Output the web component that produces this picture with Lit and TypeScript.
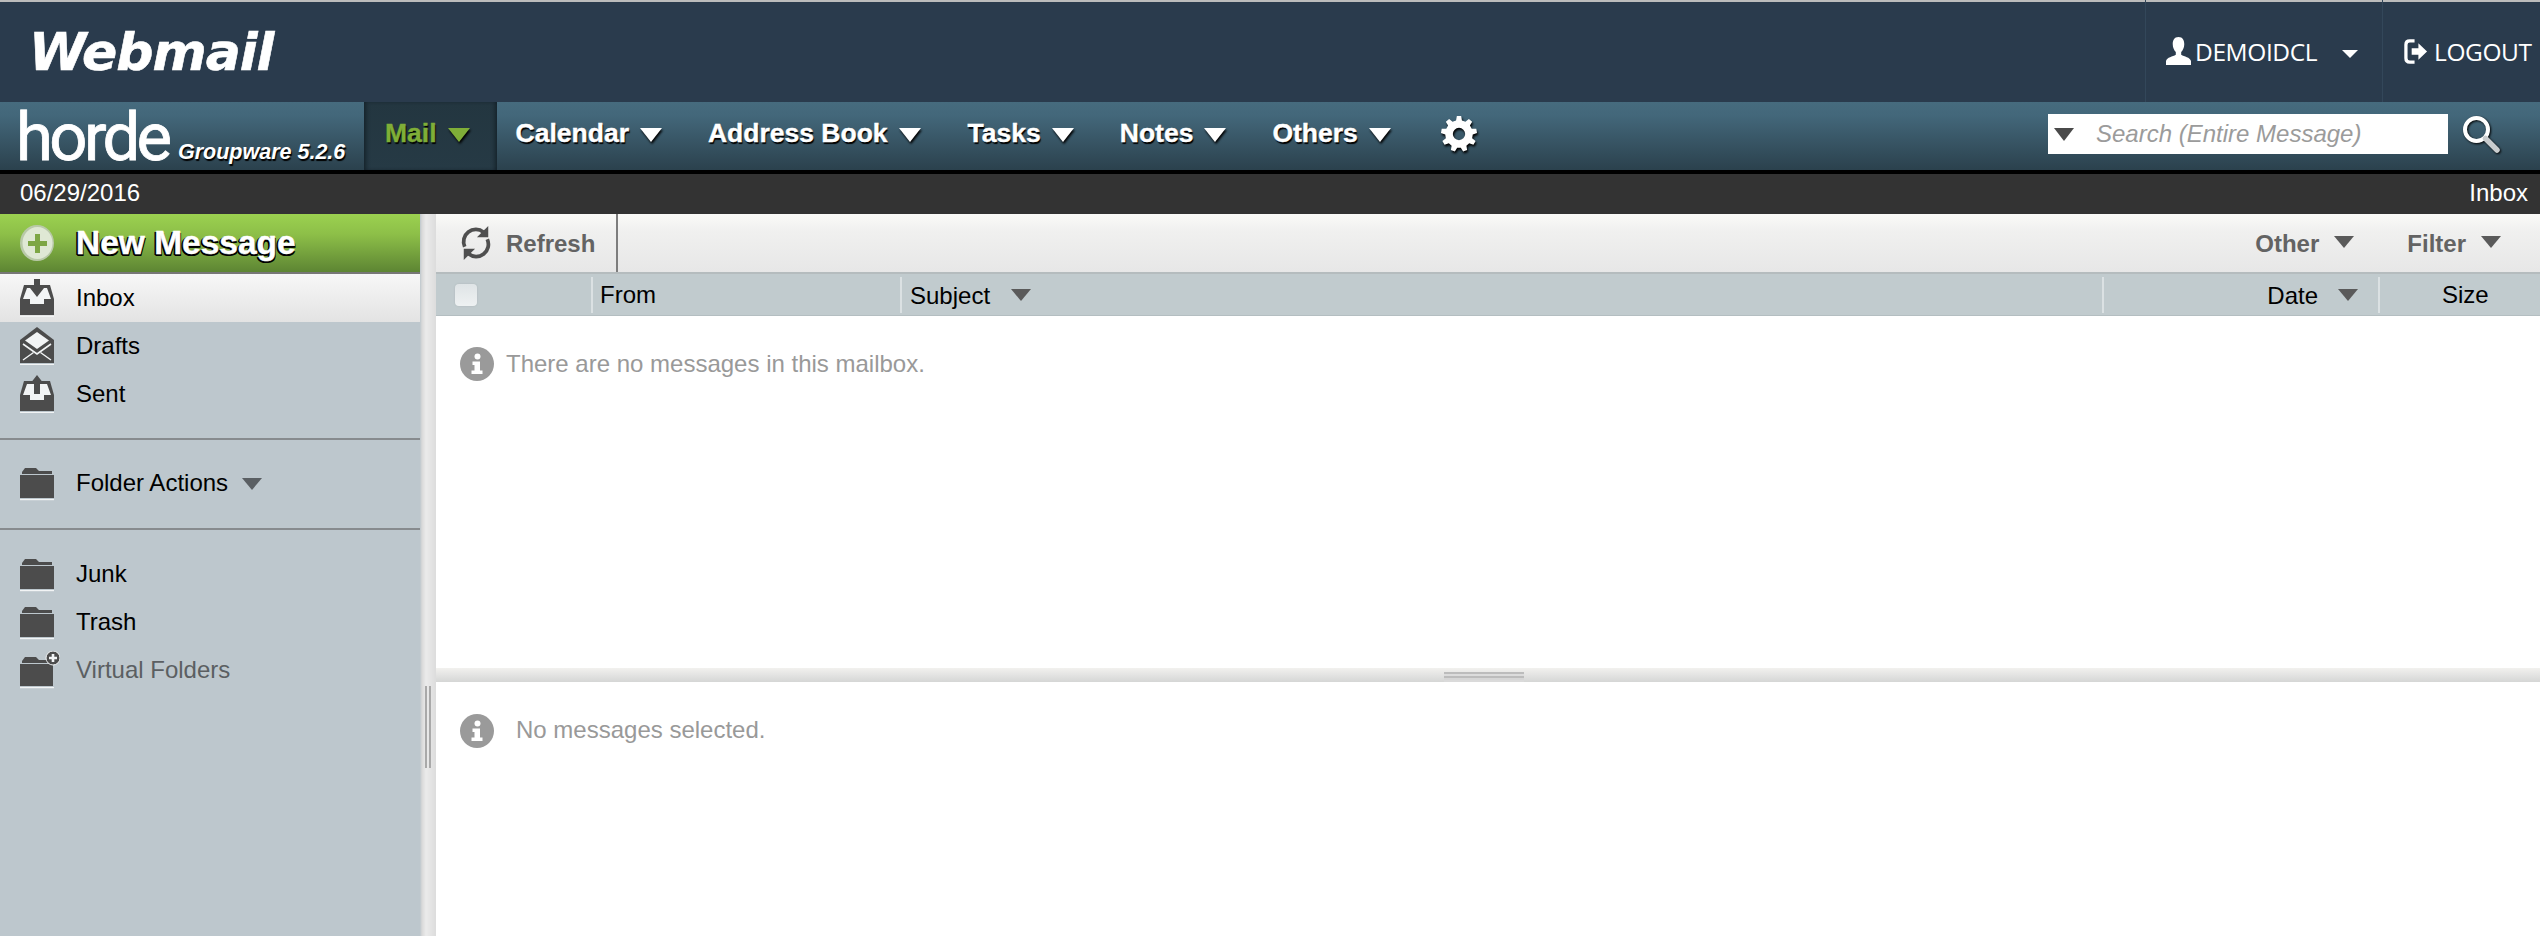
import { LitElement, html, css, svg } from "lit";
import { customElement } from "lit/decorators.js";

const gearPath = (() => {
  const cx = 20, cy = 20, n = 9, ro = 19, ri = 14.5;
  let d = "";
  for (let i = 0; i < n; i++) {
    const a = (i / n) * Math.PI * 2 - Math.PI / 2;
    const w = Math.PI / n;
    const pts = [
      [ri, a - w * 0.62],
      [ro, a - w * 0.34],
      [ro, a + w * 0.34],
      [ri, a + w * 0.62],
    ];
    for (const [r, t] of pts) {
      d += `${d ? "L" : "M"}${(cx + r * Math.cos(t)).toFixed(2)} ${(cy + r * Math.sin(t)).toFixed(2)} `;
    }
  }
  return d + "Z M20 13.5 A6.5 6.5 0 1 0 20 26.5 A6.5 6.5 0 1 0 20 13.5 Z";
})();

const ICON = "#4c4c4c";
const HI = "#f2f4f5";

const tray = (arrow: "down" | "up") => svg`
  <path d="M4 6H30L34 20V36H0V20Z" fill=${ICON}/>
  <rect x="0" y="37" width="34" height="1.2" fill=${HI}/>
  <path d="M7 9H27L31 20H24L24 25H10L10 20H3Z" fill=${HI}/>
  ${arrow === "down"
    ? svg`<path d="M14 0H20V9H24L17 18L10 9H14Z" fill=${ICON}/>`
    : svg`<path d="M17 0L24 9H20V19H14V9H10Z" fill=${ICON}/>`}
`;

const icons: Record<string, unknown> = {
  inbox: tray("down"),
  sent: tray("up"),
  drafts: svg`
    <path d="M17 0L34 13V36H0V13Z" fill=${ICON}/>
    <path d="M17 5L29 13.5L17 22L5 13.5Z" fill=${HI}/>
    <path d="M3 33L13.5 25.5M31 33L20.5 25.5" stroke=${HI} stroke-width="1.4"/>
    <path d="M3 17L17 27L31 17" fill="none" stroke=${HI} stroke-width="1.6"/>
    <rect x="0" y="37" width="34" height="1.2" fill=${HI}/>
  `,
  folder: svg`
    <path d="M2 8L5 4H16L19 7H32V10H2Z" fill=${ICON}/>
    <path d="M0 11H34V34H0Z" fill=${ICON}/>
    <rect x="0" y="35" width="34" height="1.2" fill=${HI}/>
  `,
  vfolder: svg`
    <path d="M2 10L5 6H16L19 9H29V12H2Z" fill=${ICON}/>
    <path d="M0 13H33V35H0Z" fill=${ICON}/>
    <rect x="0" y="36" width="34" height="1.2" fill=${HI}/>
    <circle cx="33" cy="7" r="7" fill=${ICON} stroke=${HI} stroke-width="1"/>
    <path d="M33 3V11M29 7H37" stroke=${HI} stroke-width="2.6"/>
  `,
};

const sideIcon = (name: string) => html`<svg class="side-icon" viewBox="0 0 40 38" width="40" height="38">${icons[name]}</svg>`;

const infoIcon = () => html`<svg class="info" viewBox="0 0 34 34" width="34" height="34">
  <circle cx="17" cy="17" r="17" fill="#9a9a9a"/>
  <circle cx="17.5" cy="9.5" r="3" fill="#fff"/>
  <path d="M12.5 14.5H20V23.5H22.5V27H11.5V23.5H14.5V18H12.5Z" fill="#fff"/>
</svg>`;

@customElement("app-root")
export class AppRoot extends LitElement {
  static styles = css`
    :host {
      display: flex;
      flex-direction: column;
      height: 100vh;
      min-height: 936px;
      overflow: hidden;
      font-family: "Liberation Sans", Arial, sans-serif;
      font-size: 24px;
      color: #000;
      background: #fff;
    }
    svg { display: block; flex: none; }

    /* top header */
    .top {
      height: 100px;
      flex: none;
      border-top: 2px solid #bcbcbc;
      background: #2a3b4d;
      display: flex;
      align-items: stretch;
      color: #fff;
    }
    .brand {
      font-family: "DejaVu Sans", sans-serif;
      font-weight: 700;
      font-style: italic;
      font-size: 52px;
      letter-spacing: -1px;
      line-height: 100px;
      margin-left: 29px;
      flex: 1;
      -webkit-text-stroke: 0.6px #fff;
    }
    .top-cell {
      border-left: 1px solid #33475a;
      display: flex;
      align-items: center;
      font-family: "Open Sans", sans-serif;
      font-size: 24.5px;
      letter-spacing: -0.4px;
      margin-top: -2px;
    }
    .user { width: 237px; padding-left: 20px; box-sizing: border-box; }
    .user .name { margin-left: 4px; }
    .user .caret { margin-left: 25px; margin-top: 6px; }
    .logout { width: 158px; padding-left: 21px; box-sizing: border-box; }
    .logout .name { margin-left: 6px; }
    .caret {
      width: 0; height: 0;
      border-left: 8px solid transparent;
      border-right: 8px solid transparent;
      border-top: 8px solid #fff;
    }

    /* nav bar */
    .nav {
      height: 68px;
      flex: none;
      background: linear-gradient(#466b7e 0%, #43677a 20%, #2b414d 100%);
      border-bottom: 4px solid #000;
      display: flex;
      align-items: stretch;
      color: #fff;
    }
    .logo {
      width: 364px;
      flex: none;
      display: flex;
      align-items: flex-end;
      box-sizing: border-box;
      padding-left: 16px;
      padding-bottom: 2px;
    }
    .horde {
      font-family: "Roboto", sans-serif;
      font-weight: 400;
      font-size: 67px;
      line-height: 68px;
      letter-spacing: -3.6px;
      width: 162px;
      flex: none;
      margin-bottom: -3px;
      -webkit-text-stroke: 0.8px #fff;
    }
    .group {
      font-weight: 700;
      font-style: italic;
      font-size: 21.5px;
      line-height: 24px;
      margin-bottom: 4px;
      text-shadow: 1px 2px 1px #000;
      white-space: nowrap;
    }
    .item {
      display: flex;
      align-items: center;
      padding: 0 27px 0 19px;
      font-weight: 700;
      font-size: 26.5px;
      text-shadow: 1px 2px 1px #000;
      white-space: nowrap;
      padding-bottom: 5px;
      -webkit-text-stroke: 0.4px currentColor;
    }
    .item.wide { padding-right: 28px; }
    .item .tri { margin-left: 11px; margin-top: 3px; }
    .item.active {
      background: linear-gradient(#233640, #263a45);
      box-shadow: inset 4px 0 4px -2px #15222a, inset -4px 0 4px -2px #15222a;
      color: #7fae38;
      padding-left: 21px;
      padding-right: 27px;
    }
    .tri {
      width: 0; height: 0;
      border-left: 11px solid transparent;
      border-right: 11px solid transparent;
      border-top: 14px solid #fff;
      filter: drop-shadow(1px 2px 1px #000);
    }
    .active .tri { border-top-color: #7fae38; }
    .gear {
      margin-left: 22px;
      align-self: center;
      margin-bottom: 4px;
      filter: drop-shadow(1px 2px 1px #000);
    }
    .spacer { flex: 1; }
    .search {
      align-self: flex-start;
      margin-top: 12px;
      width: 400px;
      height: 40px;
      background: #fff;
      display: flex;
      align-items: center;
      box-sizing: border-box;
      padding-left: 6px;
    }
    .search .dtri { border-top-color: #4a4a4a; border-left-width: 10px; border-right-width: 10px; border-top-width: 13px; }
    .search .ph {
      margin-left: 22px;
      font-style: italic;
      font-size: 24px;
      color: #9b9b9b;
    }
    .dtri {
      width: 0; height: 0;
      border-left: 10px solid transparent;
      border-right: 10px solid transparent;
      border-top: 12px solid #5a5a5a;
    }
    .mag {
      align-self: flex-start;
      margin: 13px 40px 0 14px;
      filter: drop-shadow(1px 1px 1px #000);
    }

    /* status bar */
    .status {
      height: 40px;
      flex: none;
      background: #333;
      color: #fff;
      display: flex;
      align-items: center;
      justify-content: space-between;
      padding: 0 12px 2px 20px;
      box-sizing: border-box;
    }

    /* body */
    .body { flex: 1; display: flex; min-height: 0; }
    .side {
      width: 420px;
      flex: none;
      background: #bdc7cd;
      display: flex;
      flex-direction: column;
    }
    .new {
      height: 58px;
      background: linear-gradient(#9bd150 0%, #8dbf48 35%, #5d8533 100%);
      border-bottom: 2px solid #777;
      display: flex;
      align-items: center;
      padding-left: 20px;
      gap: 22px;
      color: #fff;
      font-weight: 700;
      font-size: 33.5px;
      -webkit-text-stroke: 0.5px #fff;
      text-shadow: -2px 1px 0 #000, -1px 2px 0 #000, 1px 2px 0 #000;
    }
    .row {
      height: 48px;
      display: flex;
      align-items: center;
      padding-left: 20px;
      flex: none;
    }
    .row .side-icon { margin-right: 16px; }
    .row.cur { background: linear-gradient(#f7f7f7, #e3e3e3); }
    .row.dim { color: #5b5f62; }
    .row .dtri { margin-left: 14px; margin-top: 2px; border-top-color: #5a5f63; }
    .rule { height: 2px; background: #878b8e; flex: none; }
    .r1 { margin-top: 20px; margin-bottom: 19px; }
    .r2 { margin-top: 21px; margin-bottom: 20px; }

    .vsplit {
      width: 16px;
      flex: none;
      background: linear-gradient(90deg, #bdc7cd 0, #d9d9d9 2px, #ebebeb 6px, #dcdcdc 100%);
      position: relative;
    }
    .vgrip {
      position: absolute;
      left: 5px;
      top: 472px;
      width: 2px;
      height: 82px;
      border-left: 2px solid #a9a9a9;
      border-right: 2px solid #a9a9a9;
    }

    .main { flex: 1; display: flex; flex-direction: column; min-width: 0; }
    .toolbar {
      height: 58px;
      flex: none;
      background: linear-gradient(#fafaf8, #f0f0ef 30%, #e7e7e7);
      border-bottom: 2px solid #b5bcbe;
      display: flex;
      align-items: center;
      color: #636363;
      font-weight: 700;
    }
    .toolbar span.t { margin-top: 2px; }
    .refresh {
      width: 182px;
      height: 100%;
      box-sizing: border-box;
      border-right: 2px solid #7d7d7d;
      display: flex;
      align-items: center;
      padding-left: 24px;
      gap: 14px;
      flex: none;
    }
    .tool { display: flex; align-items: center; }
    .tool .dtri { margin-left: 15px; margin-top: -2px; }
    .tool.other { margin-right: 53px; }
    .tool.filter { margin-right: 39px; }

    .cols {
      height: 41px;
      flex: none;
      background: #c1cbce;
      border-bottom: 1px solid #b4bec1;
      display: flex;
      align-items: center;
    }
    .col {
      height: 36px;
      display: flex;
      align-items: center;
      box-sizing: border-box;
      border-right: 2px solid #dbe1e3;
      flex: none;
    }
    .check {
      width: 22px; height: 22px;
      margin-left: 19px;
      border-radius: 4px;
      background: linear-gradient(#dfe4e6, #eef1f2);
      box-shadow: 0 0 2px #aab4b8;
    }
    .c0 { width: 157px; }
    .c1 { width: 309px; padding-left: 7px; padding-top: 1px; }
    .c2 { flex: 1; padding-left: 8px; padding-top: 2px; }
    .c2 .dtri { margin-left: 21px; margin-top: -2px; }
    .c3 { width: 276px; justify-content: flex-end; padding-right: 20px; padding-top: 3px; }
    .c3 .dtri { margin-left: 20px; margin-top: -2px; }
    .c4 { width: 160px; border-right: 0; padding-left: 62px; padding-top: 1px; }

    .list {
      height: 352px;
      flex: none;
      display: flex;
      align-items: flex-start;
      color: #999;
      padding: 31px 0 0 24px;
      box-sizing: border-box;
      gap: 12px;
    }
    .list span { line-height: 34px; }
    .hsplit {
      height: 14px;
      flex: none;
      background: linear-gradient(#f2f1ee, #e6e6e5 40%, #d5d6d5);
      position: relative;
    }
    .hgrip {
      position: absolute;
      left: 1008px;
      top: 4px;
      width: 80px;
      height: 10px;
      background: linear-gradient(#bcbcbc 0 2px, #dcdcdc 2px 4px, #bcbcbc 4px 6px, #d6d6d6 6px 8px, #dadada 8px 10px);
    }
    .preview {
      flex: 1;
      display: flex;
      align-items: flex-start;
      color: #999;
      padding: 32px 0 0 24px;
      gap: 22px;
    }
    .preview span { line-height: 32px; }
  `;

  render() {
    return html`
      <div class="top">
        <div class="brand">Webmail</div>
        <div class="top-cell user">
          <svg viewBox="0 0 26 30" width="25" height="29">
            <path d="M13 0C8.5 0 7 3.5 7 7.5C7 11 8.6 14 10.2 15.6V18.5C7 20.5 1 21 0 25V29H26V25C25 21 19 20.5 15.8 18.5V15.6C17.4 14 19 11 19 7.5C19 3.5 17.5 0 13 0Z" fill="#fff"/>
          </svg>
          <span class="name">DEMOIDCL</span>
          <div class="caret"></div>
        </div>
        <div class="top-cell logout">
          <svg viewBox="0 0 25 28" width="24" height="27">
            <path d="M11 3H6C3.5 3 2 4.5 2 7V21C2 23.5 3.5 25 6 25H11" fill="none" stroke="#fff" stroke-width="3.4"/>
            <path d="M8 10.5H15V5.5L24 14L15 22.5V17.5H8Z" fill="#fff"/>
          </svg>
          <span class="name">LOGOUT</span>
        </div>
      </div>

      <div class="nav">
        <div class="logo">
          <span class="horde">horde</span>
          <span class="group">Groupware 5.2.6</span>
        </div>
        <div class="item active">Mail<span class="tri"></span></div>
        <div class="item">Calendar<span class="tri"></span></div>
        <div class="item wide">Address Book<span class="tri"></span></div>
        <div class="item">Tasks<span class="tri"></span></div>
        <div class="item">Notes<span class="tri"></span></div>
        <div class="item">Others<span class="tri"></span></div>
        <svg class="gear" viewBox="0 0 40 40" width="38" height="38">
          <path d=${gearPath} fill="#fff" fill-rule="evenodd"/>
        </svg>
        <div class="spacer"></div>
        <div class="search"><span class="dtri"></span><span class="ph">Search (Entire Message)</span></div>
        <svg class="mag" viewBox="0 0 38 38" width="38" height="38">
          <circle cx="14.5" cy="14.5" r="11.5" fill="none" stroke="#fff" stroke-width="4"/>
          <path d="M23.5 23.5L35 35" stroke="#c9cdcf" stroke-width="5.5" stroke-linecap="round"/>
        </svg>
      </div>

      <div class="status"><span>06/29/2016</span><span>Inbox</span></div>

      <div class="body">
        <div class="side">
          <div class="new">
            <svg viewBox="0 0 34 36" width="34" height="36">
              <ellipse cx="17" cy="18" rx="17" ry="18" fill="#b9c9a8"/>
              <ellipse cx="17.5" cy="18" rx="15" ry="16" fill="#dfe8d4"/>
              <path d="M15 9H20V16H27V21H20V28H15V21H8V16H15Z" fill="#7da644"/>
            </svg>
            <span>New Message</span>
          </div>
          <div class="row cur">${sideIcon("inbox")}<span>Inbox</span></div>
          <div class="row">${sideIcon("drafts")}<span>Drafts</span></div>
          <div class="row">${sideIcon("sent")}<span>Sent</span></div>
          <div class="rule r1"></div>
          <div class="row">${sideIcon("folder")}<span>Folder Actions</span><span class="dtri"></span></div>
          <div class="rule r2"></div>
          <div class="row">${sideIcon("folder")}<span>Junk</span></div>
          <div class="row">${sideIcon("folder")}<span>Trash</span></div>
          <div class="row dim">${sideIcon("vfolder")}<span>Virtual Folders</span></div>
        </div>

        <div class="vsplit"><div class="vgrip"></div></div>

        <div class="main">
          <div class="toolbar">
            <div class="refresh">
              <svg viewBox="0 0 34 36" width="32" height="34">
                <path d="M5 22A13 13 0 0 1 25 6.5" fill="none" stroke="#4f4f4f" stroke-width="4"/>
                <path d="M30 0V12H18Z" fill="#4f4f4f"/>
                <path d="M29 14A13 13 0 0 1 9 29.5" fill="none" stroke="#4f4f4f" stroke-width="4"/>
                <path d="M4 36V24H16Z" fill="#4f4f4f"/>
              </svg>
              <span class="t">Refresh</span>
            </div>
            <div class="spacer"></div>
            <div class="tool other"><span class="t">Other</span><span class="dtri"></span></div>
            <div class="tool filter"><span class="t">Filter</span><span class="dtri"></span></div>
          </div>

          <div class="cols">
            <div class="col c0"><div class="check"></div></div>
            <div class="col c1">From</div>
            <div class="col c2">Subject<span class="dtri"></span></div>
            <div class="col c3">Date<span class="dtri"></span></div>
            <div class="col c4">Size</div>
          </div>

          <div class="list">${infoIcon()}<span>There are no messages in this mailbox.</span></div>
          <div class="hsplit"><div class="hgrip"></div></div>
          <div class="preview">${infoIcon()}<span>No messages selected.</span></div>
        </div>
      </div>
    `;
  }
}
